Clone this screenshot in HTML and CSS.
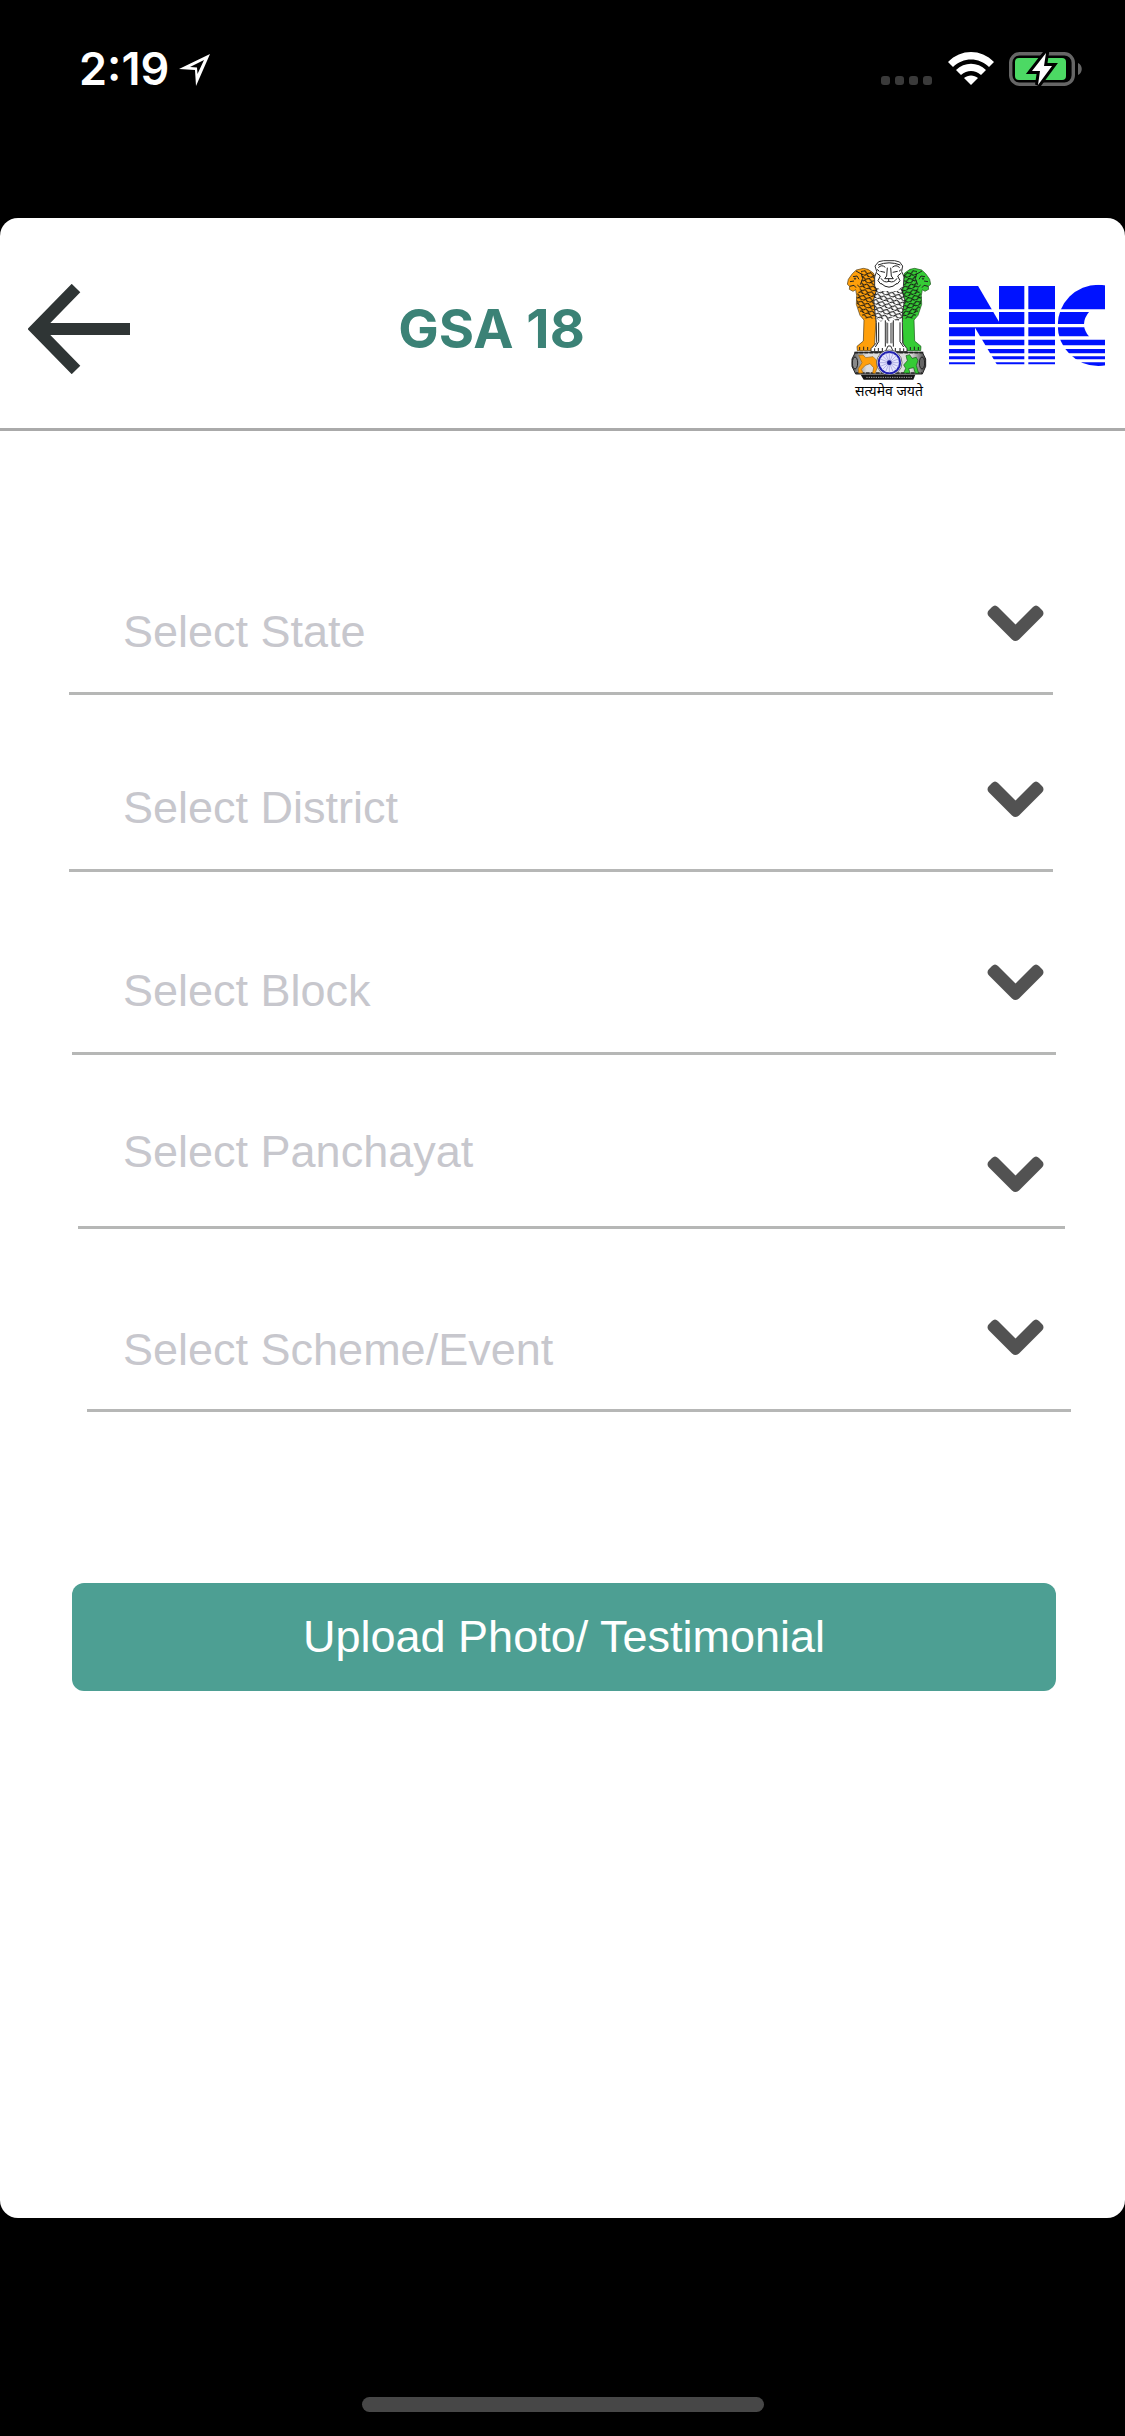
FILE: index.html
```
<!DOCTYPE html>
<html lang="en">
<head>
    <meta charset="UTF-8">
    <title>GSA 18</title>
    <meta name="viewport" content="width=device-width, initial-scale=1.0">
    <link rel="stylesheet" href="styles.css">
</head>
<body>
    <div class="screen">
        <div class="status-bar">
            <span class="time">2:19</span>
            <svg class="location" width="34" height="36" viewBox="0 0 34 36">
                <path d="M2 17 L33 2 L19 34 L18 18 Z M13 15 L27 8 L20.500 22 L20 15.500 Z" fill="#fff" fill-rule="evenodd"/>
            </svg>
            <div class="status-icons">
                <svg width="52" height="10" viewBox="0 0 52 10" fill="#3a3a3a">
                    <rect x="0" y="0" width="9" height="9" rx="3"/>
                    <rect x="14" y="0" width="9" height="9" rx="3"/>
                    <rect x="28" y="0" width="9" height="9" rx="3"/>
                    <rect x="42" y="0" width="9" height="9" rx="3"/>
                </svg>
                <svg width="46" height="34" viewBox="0 0 46 34" fill="#fff">
                    <path d="M0 10 C13 -3.300 33 -3.300 46 10 L41 15 C31 5 15 5 5 15 Z"/>
                    <path d="M8 18 C16.500 9.500 29.500 9.500 38 18 L33 23 C27 17.500 19 17.500 13 23 Z"/>
                    <path d="M16 26 C20 22.500 26 22.500 30 26 L23 33 Z"/>
                </svg>
                <svg width="74" height="34" viewBox="0 0 74 34">
                    <rect x="1.700" y="1.700" width="62.600" height="30.600" rx="9" fill="none" stroke="#666" stroke-width="3.400"/>
                    <rect x="6" y="6" width="51" height="22" rx="4" fill="#4cd964"/>
                    <path d="M69 11 C74 13 74 21 69 23 Z" fill="#666"/>
                    <path d="M37 1 L23 19 H31 L29 33 L43 14 H35 Z" fill="#fff" stroke="#000" stroke-width="6" paint-order="stroke"/>
                </svg>
            </div>
        </div>

        <main class="panel">
            <header class="header">
                <button class="back" type="button" aria-label="Back">
                    <svg width="108" height="90" viewBox="0 0 108 90">
                        <path d="M102 45 H12 M48 4 L8 45 L48 86" fill="none" stroke="#2f3535" stroke-width="12"/>
                    </svg>
                </button>
                <h1 class="title">GSA 18</h1>
                <div class="emblem">
                    <svg width="84" height="121" viewBox="49 43 252 363">
                        <defs>
                            <pattern id="mane" width="20" height="18" patternUnits="userSpaceOnUse" patternTransform="rotate(18)">
                                <path d="M0 3 Q10 15 20 3 M-10 12 Q0 24 10 12 M10 12 Q20 24 30 12" fill="none" stroke="#111" stroke-width="3"/>
                            </pattern>
                            <linearGradient id="drum">
                                <stop offset="0" stop-color="#555"/>
                                <stop offset=".2" stop-color="#ddd"/>
                                <stop offset=".8" stop-color="#ddd"/>
                                <stop offset="1" stop-color="#444"/>
                            </linearGradient>
                            <path id="side-lion" d="M98 68 L77 73 L65 84 L53 101 L50 116 L57 122 L56 131 L67 137 L75 132 L78 149 L77 176 L88 209 L100 223 L98 286 L79 302 L80 315 H124 L132 296 L136 218 L151 178 L145 119 L128 82 L112 71 Z"/>
                            <path id="side-mane" d="M91 75 L112 72 L130 87 L147 130 L149 181 L135 219 L99 218 L80 181 L77 151 L86 133 L94 101 Z"/>
                            <g id="side-lines" fill="none" stroke="#222" stroke-width="3">
                                <path d="M58 108 L70 106 M67 93 L79 91 L85 101 M57 122 L70 119 L76 126 M76 76 L92 85 L96 98 L89 117 M80 118 L89 126 M87 304 V313 M99 303 V313 M111 304 V313"/>
                                <circle cx="73" cy="99" r="2"/>
                            </g>
                        </defs>

                        <!-- left lion -->
                        <use href="#side-lion" fill="#ff9f0a" stroke="#4b3a18" stroke-width="2"/>
                        <use href="#side-mane" fill="url(#mane)"/>
                        <use href="#side-lines"/>

                        <!-- right lion -->
                        <g transform="translate(350 0) scale(-1 1)">
                            <use href="#side-lion" fill="#35cc35" stroke="#195019" stroke-width="2"/>
                            <use href="#side-mane" fill="url(#mane)"/>
                            <use href="#side-lines"/>
                        </g>

                        <!-- centre lion -->
                        <path d="M144 48 L159 45 H192 L207 49 L216 61 L213 77 L220 94 L218 123 L213 132 L222 162 L216 200 L215 230 L216 292 L229 309 V318 H188 L180 301 L172 301 L164 318 H121 V309 L138 291 L137 230 L133 200 L129 161 L138 132 L132 121 L132 94 L138 77 L133 61 Z" fill="#fff" stroke="#333" stroke-width="3"/>
                        <path d="M137 122 L151 136 H200 L215 122 L222 162 L214 218 L198 228 L184 214 L175 228 L164 214 L151 228 L137 218 L129 161 Z" fill="url(#mane)"/>
                        <g fill="none" stroke="#222" stroke-width="3">
                            <path d="M142 58 Q175 45 209 58 M143 66 Q153 55 164 65 M185 65 Q196 55 207 66 M149 77 L163 80 M186 80 L201 77 M170 66 L168 91 L162 99 H188 L182 91 L180 66 M174 99 V108 M151 98 Q160 113 175 107 Q190 113 199 98 M151 113 Q175 136 199 113 M138 82 L149 91 L142 105 L151 116 M212 82 L201 91 L208 105 L199 116 M139 71 L146 77 M212 71 L205 77"/>
                            <path d="M144 230 V288 L134 304 M164 224 V303 M171 232 V293 M181 232 V293 M188 224 V303 M208 230 V288 L219 304 M132 308 V316 M143 307 V316 M155 307 V316 M194 307 V316 M208 307 V316 M219 308 V316"/>
                        </g>
                        <path d="M168 230 V293 M185 230 V293" stroke="#999" stroke-width="5"/>

                        <!-- abacus and wheel -->
                        <path d="M74 320 H275 L285 340 V362 L275 385 H75 L64 362 V340 Z" fill="url(#drum)" stroke="#222" stroke-width="3"/>
                        <path d="M71 321 H279 M75 382 H274" stroke="#222" stroke-width="5" stroke-dasharray="12 3"/>
                        <ellipse cx="73" cy="352" rx="8" ry="18" fill="#888" stroke="#222" stroke-width="3"/>
                        <ellipse cx="274" cy="352" rx="8" ry="18" fill="#666" stroke="#222" stroke-width="3"/>
                        <path d="M84 329 L97 328 L105 336 L127 333 L137 343 L140 365 L133 383 L126 382 L129 366 L118 354 L104 359 L92 371 L97 382 H84 L83 369 L94 351 Z" fill="#ff9f0a" stroke="#9a6717" stroke-width="2"/>
                        <path d="M226 330 L237 327 L244 338 L257 335 L262 345 L257 359 L264 383 H254 L249 366 L234 369 L238 382 H219 L225 368 L219 358 L230 345 Z" fill="#35cc35" stroke="#195019" stroke-width="2"/>
                        <circle cx="176" cy="351" r="38" fill="#fff" stroke="#333" stroke-width="2"/>
                        <circle cx="176" cy="351" r="32" fill="#e5e5ff" stroke="#2020b0" stroke-width="6"/>
                        <path d="M176 321 V381 M146 351 H206 M155 330 L197 372 M155 372 L197 330 M164.500 323 L187.500 379 M164.500 379 L187.500 323 M148 339.500 L204 362.500 M148 362.500 L204 339.500" stroke="#9797d8" stroke-width="2"/>
                        <circle cx="176" cy="351" r="7" fill="#15158e"/>
                        <path d="M90 387 H254 L248 402 H99 Z" fill="#151515"/>
                        <path d="M107 395 H244" stroke="#aaa" stroke-width="3" stroke-dasharray="4 3"/>
                    </svg>
                    <span class="motto" lang="hi">सत्यमेव जयते</span>
                </div>
                <svg class="nic" role="img" aria-label="NIC" width="158" height="84" viewBox="54 74 474 252">
                    <defs>
                        <clipPath id="disc"><circle cx="505" cy="198" r="122"/></clipPath>
                    </defs>
                    <g fill="#0012ff">
                        <path d="M57 80h226v70h-226z M57 158h226v36h-226z M57 204h226v27h-226z M57 241h226v17h-226z M57 269h226v13h-226z M57 291h226v9h-226z M57 309h226v6h-226z"/>
                        <path d="M295 80h80v70h-80z M295 158h80v36h-80z M295 204h80v27h-80z M295 241h80v17h-80z M295 269h80v13h-80z M295 291h80v9h-80z M295 309h80v6h-80z"/>
                        <path clip-path="url(#disc)" d="M383 76h142v74h-142z M383 158h142v36h-142z M383 204h142v27h-142z M383 241h142v17h-142z M383 269h142v13h-142z M383 291h142v9h-142z M383 309h142v11h-142z"/>
                    </g>
                    <g fill="#fff">
                        <path d="M143 78 H207 V187 Z"/>
                        <path d="M135 205 V320 H203 Z"/>
                        <path d="M480 154 Q444 195 480 235 H528 V154 Z"/>
                    </g>
                </svg>
            </header>

            <svg width="0" height="0" class="sprite">
                <symbol id="chevron" viewBox="0 0 57 36">
                    <path d="M5 2 Q8 -1 11 2 L28.500 19.500 L46 2 Q49 -1 52 2 L55 5 Q58 8 55 11.500 L32 34.500 Q28.500 37.500 25 34.500 L2 11.500 Q-1 8 2 5 Z"/>
                </symbol>
            </svg>

            <form class="form">
                <div class="field state">
                    <select aria-label="State"><option>Select State</option></select>
                    <svg class="chevron"><use href="#chevron"/></svg>
                </div>
                <hr class="line">
                <div class="field district">
                    <select aria-label="District"><option>Select District</option></select>
                    <svg class="chevron"><use href="#chevron"/></svg>
                </div>
                <hr class="line">
                <div class="field block">
                    <select aria-label="Block"><option>Select Block</option></select>
                    <svg class="chevron"><use href="#chevron"/></svg>
                </div>
                <hr class="line line-block">
                <div class="field panchayat">
                    <select aria-label="Panchayat"><option>Select Panchayat</option></select>
                    <svg class="chevron"><use href="#chevron"/></svg>
                </div>
                <hr class="line line-panchayat">
                <div class="field scheme">
                    <select aria-label="Scheme or event"><option>Select Scheme/Event</option></select>
                    <svg class="chevron"><use href="#chevron"/></svg>
                </div>
                <hr class="line line-scheme">
                <button class="upload" type="button">Upload Photo/ Testimonial</button>
            </form>
        </main>

        <div class="bottom-bar">
            <div class="home-indicator"></div>
        </div>
    </div>
</body>
</html>
```

FILE: styles.css
```
* {
    box-sizing: border-box;
}
body {
    margin: 0;
    background: #000;
    font-family: "Liberation Sans", Arial, sans-serif;
}
svg {
    display: block;
    flex: none;
}
.screen {
    display: flex;
    flex-direction: column;
    min-height: 100vh;
}

/* status bar */
.status-bar {
    display: flex;
    align-items: flex-start;
    height: 218px;
    padding: 52px 42px 0 79px;
    color: #fff;
}
.time {
    font-family: Inter, sans-serif;
    font-size: 45px;
    font-weight: 600;
    line-height: 34px;
}
.location {
    margin-left: 8px;
}
.status-icons {
    display: flex;
    align-items: flex-end;
    gap: 15px;
    margin-left: auto;
}

/* white app area */
.panel {
    flex: 1;
    background: #fff;
    border-radius: 18px;
}
.header {
    display: flex;
    align-items: center;
    height: 213px;
    padding: 12px 19px 0 28px;
    border-bottom: 3px solid #aaa;
}
.back {
    padding: 0;
    border: none;
    background: none;
    cursor: pointer;
}
.title {
    flex: 1;
    margin: 0;
    font-family: Inter, sans-serif;
    font-size: 54px;
    font-weight: 700;
    line-height: 64px;
    text-align: center;
    color: #3b8276;
}
.emblem {
    display: flex;
    flex-direction: column;
    align-items: center;
    width: 84px;
    margin-right: 17px;
    padding-top: 6px;
}
.motto {
    font-family: "Noto Sans Devanagari", "Noto Sans", sans-serif;
    font-size: 14px;
    line-height: 24px;
    white-space: nowrap;
    color: #000;
}
.nic {
    margin-bottom: 6px;
}

/* form */
.sprite {
    position: absolute;
}
.form {
    padding-top: 88px;
}
.field {
    display: flex;
    align-items: flex-start;
    padding: 0 81px 0 123px;
}
.field select {
    flex: 1;
    height: 54px;
    margin: 0;
    padding: 0;
    border: none;
    background: none;
    appearance: none;
    font-family: inherit;
    font-size: 45px;
    line-height: 54px;
    color: #c7c7cd;
}
.chevron {
    width: 57px;
    height: 36px;
    fill: #525252;
}
.line {
    height: 3px;
    margin: 0 72px 0 69px;
    border: none;
    background: #b6b7b6;
}
.line-block {
    margin: 0 69px 0 72px;
}
.line-panchayat {
    margin: 0 60px 0 78px;
}
.line-scheme {
    margin: 0 54px 0 87px;
}
.state {
    height: 173px;
    padding-top: 86px;
}
.district {
    height: 174px;
    padding-top: 86px;
}
.block {
    height: 180px;
    padding-top: 92px;
}
.panchayat {
    height: 171px;
    padding-top: 70px;
}
.panchayat .chevron {
    align-self: flex-end;
    margin-bottom: 34px;
}
.scheme {
    height: 180px;
    padding-top: 90px;
}
.scheme select {
    margin-top: 4px;
}
.upload {
    display: block;
    width: calc(100% - 141px);
    height: 108px;
    margin: 171px 69px 0 72px;
    padding: 0;
    border: none;
    border-radius: 12px;
    background: #4d9f93;
    font-family: inherit;
    font-size: 45px;
    line-height: 54px;
    color: #fff;
    cursor: pointer;
}

/* home indicator */
.bottom-bar {
    display: flex;
    align-items: flex-end;
    justify-content: center;
    height: 218px;
    padding-bottom: 24px;
}
.home-indicator {
    width: 402px;
    height: 15px;
    border-radius: 8px;
    background: #474747;
}
```
